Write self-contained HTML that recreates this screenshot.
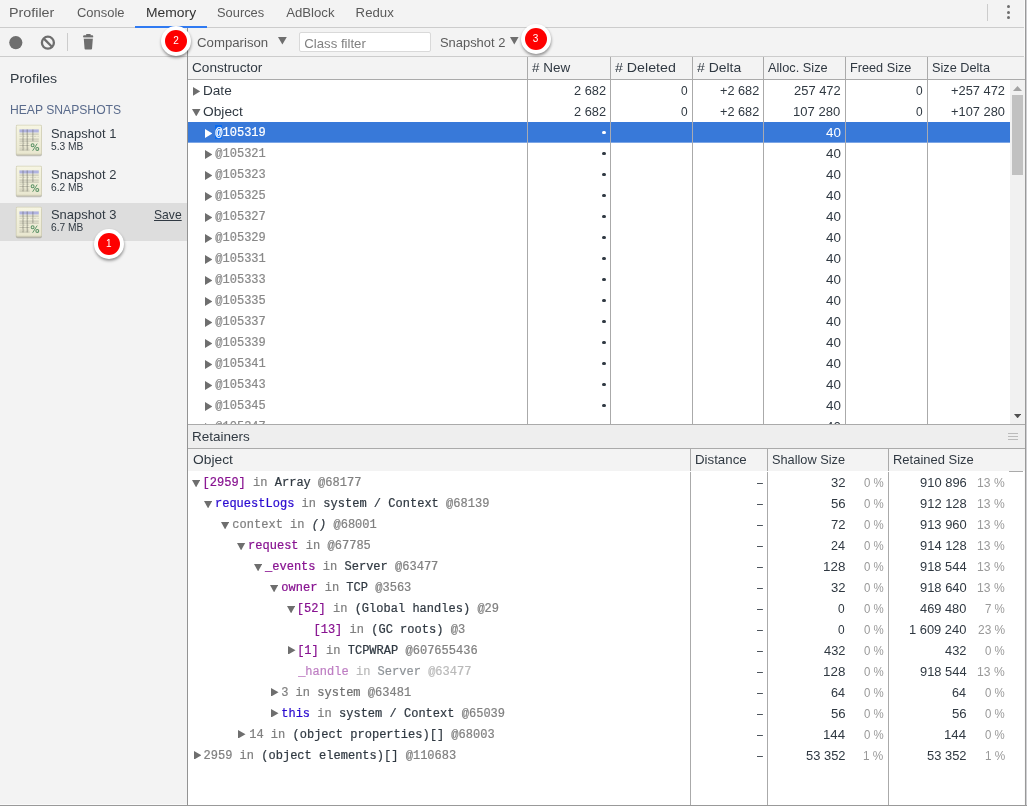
<!DOCTYPE html><html><head><meta charset="utf-8"><title>DevTools Memory</title><style>
*{box-sizing:border-box;margin:0;padding:0}
html,body{width:1027px;height:806px;overflow:hidden;background:#f3f3f3}
#app{position:absolute;left:0;top:0;width:1027px;height:806px;will-change:transform}
body{position:relative;font-family:"Liberation Sans",sans-serif;font-size:12.1px;color:#303942}
.abs,.t,.m{position:absolute;white-space:pre}
.t{font-family:"Liberation Sans",sans-serif;font-size:12.1px;line-height:20px;height:20px;color:#303942;transform-origin:0 50%}
.m{font-family:"Liberation Mono",monospace;font-size:12px;line-height:20px;height:20px;color:#303942;letter-spacing:.02px;transform-origin:0 50%;-webkit-text-stroke:.22px}
.hl{position:absolute;height:1px;background:#aaa}
.vl{position:absolute;width:1px;background:#aaa}
.g{color:#808080}
.p{color:#881391}
.b{color:#2a0ad0}
.pc{color:#999}
.badge{position:absolute;width:22px;height:22px;border-radius:50%;background:#fe0000;color:#fff;font-size:10px;line-height:22px;text-align:center;box-shadow:0 0 0 4px #fff,.3px 1.8px 3px 4px rgba(0,0,0,.4)}
</style></head><body><div id="app">
<div class="abs" id="tabbar" style="left:0px;top:0px;width:1027px;height:28px;background:#f3f3f3;border-bottom:1px solid #ccc"></div>
<div class="t" style="top:3px;left:9.41px;transform:scaleX(1.0858);font-size:13.2px;color:#5a5a5a;">Profiler</div>
<div class="t" style="top:3px;left:77.10px;transform:scaleX(0.9822);font-size:13.2px;color:#5a5a5a;">Console</div>
<div class="t" style="top:3px;left:145.65px;transform:scaleX(1.0521);font-size:13.2px;color:#333;">Memory</div>
<div class="t" style="top:3px;left:217.18px;transform:scaleX(0.9757);font-size:13.2px;color:#5a5a5a;">Sources</div>
<div class="t" style="top:3px;left:286.17px;font-size:13.2px;color:#5a5a5a;">AdBlock</div>
<div class="t" style="top:3px;left:355.62px;font-size:13.2px;color:#5a5a5a;">Redux</div>
<div class="abs" style="left:135px;top:26px;width:72.4px;height:2px;background:#2f7af2;"></div>
<div class="abs" style="left:987px;top:4.2px;width:1px;height:16.6px;background:#ccc;"></div>
<div class="abs" style="left:1006.8px;top:5.2px;width:3.2px;height:3.2px;background:#6e6e6e;border-radius:50%"></div>
<div class="abs" style="left:1006.8px;top:10.75px;width:3.2px;height:3.2px;background:#6e6e6e;border-radius:50%"></div>
<div class="abs" style="left:1006.8px;top:16.3px;width:3.2px;height:3.2px;background:#6e6e6e;border-radius:50%"></div>
<div class="abs" id="toolbar" style="left:0px;top:28px;width:1027px;height:29px;background:#f3f3f3;border-bottom:1px solid #ccc"></div>
<svg class="abs" style="left:0;top:28px" width="110" height="28" viewBox="0 0 110 28"><circle cx="15.8" cy="14.6" r="6.6" fill="#6e6e6e"/><circle cx="47.9" cy="14.7" r="6" fill="none" stroke="#6e6e6e" stroke-width="2.3"/><path d="M43.6 10.4 L52.2 19" stroke="#6e6e6e" stroke-width="2.3"/><path d="M67.5 5v18" stroke="#ccc" stroke-width="1"/><path d="M86.2 6.1h4.4v1.3h-4.4z M83.1 9.2v-1q0-1 1-1h8.1q1 0 1 1v1z M83.8 11.1h9l-.75 9.4q-.08 .9 -.95 .9h-5.6q-.87 0 -.95 -.9z" fill="#6e6e6e"/><path d="M83.7 9.2h9.2v1.9h-9.2z" fill="#6e6e6e" opacity=".3"/></svg>
<div class="t" style="top:33px;left:197.09px;font-size:13.2px;color:#5a5a5a;">Comparison</div>
<svg class="abs" style="left:277.9px;top:37.2px" width="8.8" height="7.5" viewBox="0 0 8.8 7.5"><path d="M0 0L8.8 0L4.4 7.5z" fill="#6e6e6e"/></svg>
<div class="abs" style="left:299px;top:32px;width:131.5px;height:20px;background:#fff;border:1px solid #d9d9d9;border-radius:2px"></div>
<div class="t" style="top:34px;left:304.29px;font-size:13.2px;color:#808080;">Class filter</div>
<div class="t" style="top:33px;left:439.57px;transform:scaleX(0.9794);font-size:13.2px;color:#5a5a5a;">Snapshot 2</div>
<svg class="abs" style="left:510.4px;top:37.2px" width="8.6" height="7.5" viewBox="0 0 8.6 7.5"><path d="M0 0L8.6 0L4.3 7.5z" fill="#6e6e6e"/></svg>
<div class="t" style="top:69px;left:10.23px;transform:scaleX(1.0703);font-size:13.2px;">Profiles</div>
<div class="t" style="top:100px;left:9.91px;transform:scaleX(0.9206);font-size:13.2px;color:#5a6b8c;">HEAP SNAPSHOTS</div>
<div class="abs" style="left:0px;top:203px;width:187px;height:37.5px;background:#dddddd;"></div>
<svg class="abs" style="left:13.9px;top:123.1px" width="30" height="35" viewBox="0 0 30 35"><defs><linearGradient id="ig0" x1="0" y1="0" x2="0" y2="1"><stop offset="0" stop-color="#f6f5e2"/><stop offset="1" stop-color="#e9e7d0"/></linearGradient></defs><rect x="1.9" y="3" width="26" height="30.2" rx="1.6" fill="#84826c" opacity=".45"/><rect x="1.9" y="1.7" width="26" height="30" rx="1.4" fill="#d3d1b8"/><rect x="2.7" y="2.5" width="24.4" height="28.2" rx=".8" fill="url(#ig0)"/><rect x="5.4" y="6.4" width="19.4" height="3.1" fill="#b0b3e0"/><g stroke="#8e8d80" stroke-width=".8" opacity=".62"><path d="M5.4 11.1h19.4M5.4 16.1h19.4M5.4 18.1h19.4M5.4 22.6h10.2M5.4 27h10.2"/></g><g stroke="#8e8d80" stroke-width=".8" opacity=".4" stroke-dasharray="2.6 1"><path d="M5.4 13.3h19.4M5.4 20.2h10.2M5.4 25.1h10.2"/></g><g stroke="#5a5a52" stroke-width=".6" opacity=".8"><path d="M9 6.4v21M13.2 6.4v21M18.9 6.4v11.8"/></g><g fill="none" stroke="#5a9165" stroke-width="1.05"><circle cx="18.6" cy="22.2" r="1.45"/><circle cx="23.3" cy="25.9" r="1.45"/><path d="M23.2 20.6l-4.6 7.2" stroke-width=".95"/></g></svg>
<div class="t" style="top:124px;left:50.62px;transform:scaleX(0.9805);font-size:13.2px;">Snapshot 1</div>
<div class="t" style="top:136px;left:51.12px;transform:scaleX(0.9633);font-size:10.6px;">5.3 MB</div>
<svg class="abs" style="left:13.9px;top:164.0px" width="30" height="35" viewBox="0 0 30 35"><defs><linearGradient id="ig1" x1="0" y1="0" x2="0" y2="1"><stop offset="0" stop-color="#f6f5e2"/><stop offset="1" stop-color="#e9e7d0"/></linearGradient></defs><rect x="1.9" y="3" width="26" height="30.2" rx="1.6" fill="#84826c" opacity=".45"/><rect x="1.9" y="1.7" width="26" height="30" rx="1.4" fill="#d3d1b8"/><rect x="2.7" y="2.5" width="24.4" height="28.2" rx=".8" fill="url(#ig1)"/><rect x="5.4" y="6.4" width="19.4" height="3.1" fill="#b0b3e0"/><g stroke="#8e8d80" stroke-width=".8" opacity=".62"><path d="M5.4 11.1h19.4M5.4 16.1h19.4M5.4 18.1h19.4M5.4 22.6h10.2M5.4 27h10.2"/></g><g stroke="#8e8d80" stroke-width=".8" opacity=".4" stroke-dasharray="2.6 1"><path d="M5.4 13.3h19.4M5.4 20.2h10.2M5.4 25.1h10.2"/></g><g stroke="#5a5a52" stroke-width=".6" opacity=".8"><path d="M9 6.4v21M13.2 6.4v21M18.9 6.4v11.8"/></g><g fill="none" stroke="#5a9165" stroke-width="1.05"><circle cx="18.6" cy="22.2" r="1.45"/><circle cx="23.3" cy="25.9" r="1.45"/><path d="M23.2 20.6l-4.6 7.2" stroke-width=".95"/></g></svg>
<div class="t" style="top:165px;left:50.62px;transform:scaleX(0.9809);font-size:13.2px;">Snapshot 2</div>
<div class="t" style="top:177px;left:51.17px;transform:scaleX(0.9615);font-size:10.6px;">6.2 MB</div>
<svg class="abs" style="left:13.9px;top:204.9px" width="30" height="35" viewBox="0 0 30 35"><defs><linearGradient id="ig2" x1="0" y1="0" x2="0" y2="1"><stop offset="0" stop-color="#f6f5e2"/><stop offset="1" stop-color="#e9e7d0"/></linearGradient></defs><rect x="1.9" y="3" width="26" height="30.2" rx="1.6" fill="#84826c" opacity=".45"/><rect x="1.9" y="1.7" width="26" height="30" rx="1.4" fill="#d3d1b8"/><rect x="2.7" y="2.5" width="24.4" height="28.2" rx=".8" fill="url(#ig2)"/><rect x="5.4" y="6.4" width="19.4" height="3.1" fill="#b0b3e0"/><g stroke="#8e8d80" stroke-width=".8" opacity=".62"><path d="M5.4 11.1h19.4M5.4 16.1h19.4M5.4 18.1h19.4M5.4 22.6h10.2M5.4 27h10.2"/></g><g stroke="#8e8d80" stroke-width=".8" opacity=".4" stroke-dasharray="2.6 1"><path d="M5.4 13.3h19.4M5.4 20.2h10.2M5.4 25.1h10.2"/></g><g stroke="#5a5a52" stroke-width=".6" opacity=".8"><path d="M9 6.4v21M13.2 6.4v21M18.9 6.4v11.8"/></g><g fill="none" stroke="#5a9165" stroke-width="1.05"><circle cx="18.6" cy="22.2" r="1.45"/><circle cx="23.3" cy="25.9" r="1.45"/><path d="M23.2 20.6l-4.6 7.2" stroke-width=".95"/></g></svg>
<div class="t" style="top:205px;left:50.62px;transform:scaleX(0.9805);font-size:13.2px;">Snapshot 3</div>
<div class="t" style="top:217px;left:51.17px;transform:scaleX(0.9615);font-size:10.6px;">6.7 MB</div>
<div class="t" style="top:205px;left:153.69px;transform:scaleX(0.9213);font-size:13.2px;text-decoration:underline;">Save</div>
<div class="abs" id="main" style="left:188px;top:57px;width:837px;height:748px;background:#fff;"></div>
<div class="abs" style="left:187px;top:28px;width:1px;height:778px;background:#939393;"></div>
<div class="abs" style="left:1024px;top:0px;width:1px;height:806px;background:#fafafa;"></div>
<div class="abs" style="left:1025px;top:0px;width:1px;height:806px;background:#999;"></div>
<div class="abs" style="left:1026px;top:0px;width:1px;height:806px;background:#cfcfd2;"></div>
<div class="abs" style="left:0px;top:804px;width:187px;height:1px;background:#fafafa;"></div>
<div class="abs" style="left:0px;top:805px;width:1027px;height:1px;background:#999;"></div>
<div class="abs" style="left:188px;top:57px;width:837px;height:22px;background:#f3f3f3;"></div>
<div class="hl" style="left:188px;top:79px;width:837px;background:#aaa"></div>
<div class="vl" style="left:527px;top:57px;height:367px;background:#aaa"></div>
<div class="vl" style="left:610px;top:57px;height:367px;background:#aaa"></div>
<div class="vl" style="left:692px;top:57px;height:367px;background:#aaa"></div>
<div class="vl" style="left:763px;top:57px;height:367px;background:#aaa"></div>
<div class="vl" style="left:845px;top:57px;height:367px;background:#aaa"></div>
<div class="vl" style="left:927px;top:57px;height:367px;background:#aaa"></div>
<div class="t" style="top:58px;left:192.46px;transform:scaleX(1.1254);">Constructor</div>
<div class="t" style="top:58px;left:532.15px;transform:scaleX(1.1136);"># New</div>
<div class="t" style="top:58px;left:615.12px;transform:scaleX(1.1755);"># Deleted</div>
<div class="t" style="top:58px;left:697.03px;transform:scaleX(1.1534);"># Delta</div>
<div class="t" style="top:58px;left:768.45px;transform:scaleX(1.0566);">Alloc. Size</div>
<div class="t" style="top:58px;left:850.13px;transform:scaleX(1.0499);">Freed Size</div>
<div class="t" style="top:58px;left:932.36px;transform:scaleX(1.0513);">Size Delta</div>
<div class="abs" style="left:188px;top:122px;width:822px;height:20px;background:#3879d9;"></div>
<div class="abs" style="left:188px;top:142px;width:822px;height:1px;background:#7ca6e6;"></div>
<div class="abs" style="left:527px;top:122px;width:1px;height:21px;background:#a8aab2;"></div>
<div class="abs" style="left:610px;top:122px;width:1px;height:21px;background:#a8aab2;"></div>
<div class="abs" style="left:692px;top:122px;width:1px;height:21px;background:#a8aab2;"></div>
<div class="abs" style="left:763px;top:122px;width:1px;height:21px;background:#a8aab2;"></div>
<div class="abs" style="left:845px;top:122px;width:1px;height:21px;background:#a8aab2;"></div>
<div class="abs" style="left:927px;top:122px;width:1px;height:21px;background:#a8aab2;"></div>
<svg class="abs" style="left:193px;top:87px" width="7.1" height="8.7" viewBox="0 0 7.1 8.7"><path d="M0 0L7.1 4.35L0 8.7z" fill="#6e6e6e"/></svg>
<div class="t" style="top:81px;left:203.34px;transform:scaleX(1.1235);">Date</div>
<svg class="abs" style="left:192px;top:108.6px" width="8.5" height="7.4" viewBox="0 0 8.5 7.4"><path d="M0 0L8.5 0L4.25 7.4z" fill="#6e6e6e"/></svg>
<div class="t" style="top:102px;left:203.48px;transform:scaleX(1.1361);">Object</div>
<div class="t" style="top:81px;left:573.68px;transform:scaleX(1.0581);">2 682</div>
<div class="t" style="top:81px;left:681.35px;transform:scaleX(0.9862);">0</div>
<div class="t" style="top:81px;left:719.61px;transform:scaleX(1.0517);">+2 682</div>
<div class="t" style="top:81px;left:793.83px;transform:scaleX(1.0696);">257 472</div>
<div class="t" style="top:81px;left:915.85px;transform:scaleX(0.9862);">0</div>
<div class="t" style="top:81px;left:950.56px;transform:scaleX(1.0633);">+257 472</div>
<div class="t" style="top:102px;left:573.68px;transform:scaleX(1.0581);">2 682</div>
<div class="t" style="top:102px;left:681.35px;transform:scaleX(0.9862);">0</div>
<div class="t" style="top:102px;left:719.61px;transform:scaleX(1.0517);">+2 682</div>
<div class="t" style="top:102px;left:793.35px;transform:scaleX(1.0788);">107 280</div>
<div class="t" style="top:102px;left:915.85px;transform:scaleX(0.9862);">0</div>
<div class="t" style="top:102px;left:950.56px;transform:scaleX(1.0616);">+107 280</div>
<div class="abs" style="left:188px;top:80px;width:822px;height:344px;overflow:hidden" id="ugrid">
<svg class="abs" style="left:17px;top:49px" width="7.4" height="9" viewBox="0 0 7.4 9"><path d="M0 0L7.4 4.5L0 9z" fill="#fff"/></svg>
<div class="abs" style="left:27.10px;top:45px;width:7px;height:14px;background:#0b6cf0;"></div>
<div class="m" style="top:43px;left:27.26px;color:#fff;">@105319</div>
<div class="abs" style="left:414.1px;top:50.70px;width:3.5px;height:3.5px;background:#fff;border-radius:50%"></div>
<div class="t" style="top:43px;left:638.12px;transform:scaleX(1.1097);color:#fff;">40</div>
<svg class="abs" style="left:17px;top:70px" width="7.4" height="9" viewBox="0 0 7.4 9"><path d="M0 0L7.4 4.5L0 9z" fill="#6e6e6e"/></svg>
<div class="m" style="top:64px;left:27.26px;color:#888;">@105321</div>
<div class="abs" style="left:414.1px;top:71.70px;width:3.5px;height:3.5px;background:#303942;border-radius:50%"></div>
<div class="t" style="top:64px;left:638.12px;transform:scaleX(1.1097);">40</div>
<svg class="abs" style="left:17px;top:91px" width="7.4" height="9" viewBox="0 0 7.4 9"><path d="M0 0L7.4 4.5L0 9z" fill="#6e6e6e"/></svg>
<div class="m" style="top:85px;left:27.26px;color:#888;">@105323</div>
<div class="abs" style="left:414.1px;top:92.70px;width:3.5px;height:3.5px;background:#303942;border-radius:50%"></div>
<div class="t" style="top:85px;left:638.12px;transform:scaleX(1.1097);">40</div>
<svg class="abs" style="left:17px;top:112px" width="7.4" height="9" viewBox="0 0 7.4 9"><path d="M0 0L7.4 4.5L0 9z" fill="#6e6e6e"/></svg>
<div class="m" style="top:106px;left:27.26px;color:#888;">@105325</div>
<div class="abs" style="left:414.1px;top:113.70px;width:3.5px;height:3.5px;background:#303942;border-radius:50%"></div>
<div class="t" style="top:106px;left:638.12px;transform:scaleX(1.1097);">40</div>
<svg class="abs" style="left:17px;top:133px" width="7.4" height="9" viewBox="0 0 7.4 9"><path d="M0 0L7.4 4.5L0 9z" fill="#6e6e6e"/></svg>
<div class="m" style="top:127px;left:27.26px;color:#888;">@105327</div>
<div class="abs" style="left:414.1px;top:134.7px;width:3.5px;height:3.5px;background:#303942;border-radius:50%"></div>
<div class="t" style="top:127px;left:638.12px;transform:scaleX(1.1097);">40</div>
<svg class="abs" style="left:17px;top:154px" width="7.4" height="9" viewBox="0 0 7.4 9"><path d="M0 0L7.4 4.5L0 9z" fill="#6e6e6e"/></svg>
<div class="m" style="top:148px;left:27.26px;color:#888;">@105329</div>
<div class="abs" style="left:414.1px;top:155.7px;width:3.5px;height:3.5px;background:#303942;border-radius:50%"></div>
<div class="t" style="top:148px;left:638.12px;transform:scaleX(1.1097);">40</div>
<svg class="abs" style="left:17px;top:175px" width="7.4" height="9" viewBox="0 0 7.4 9"><path d="M0 0L7.4 4.5L0 9z" fill="#6e6e6e"/></svg>
<div class="m" style="top:169px;left:27.26px;color:#888;">@105331</div>
<div class="abs" style="left:414.1px;top:176.7px;width:3.5px;height:3.5px;background:#303942;border-radius:50%"></div>
<div class="t" style="top:169px;left:638.12px;transform:scaleX(1.1097);">40</div>
<svg class="abs" style="left:17px;top:196px" width="7.4" height="9" viewBox="0 0 7.4 9"><path d="M0 0L7.4 4.5L0 9z" fill="#6e6e6e"/></svg>
<div class="m" style="top:190px;left:27.26px;color:#888;">@105333</div>
<div class="abs" style="left:414.1px;top:197.7px;width:3.5px;height:3.5px;background:#303942;border-radius:50%"></div>
<div class="t" style="top:190px;left:638.12px;transform:scaleX(1.1097);">40</div>
<svg class="abs" style="left:17px;top:217px" width="7.4" height="9" viewBox="0 0 7.4 9"><path d="M0 0L7.4 4.5L0 9z" fill="#6e6e6e"/></svg>
<div class="m" style="top:211px;left:27.26px;color:#888;">@105335</div>
<div class="abs" style="left:414.1px;top:218.7px;width:3.5px;height:3.5px;background:#303942;border-radius:50%"></div>
<div class="t" style="top:211px;left:638.12px;transform:scaleX(1.1097);">40</div>
<svg class="abs" style="left:17px;top:238px" width="7.4" height="9" viewBox="0 0 7.4 9"><path d="M0 0L7.4 4.5L0 9z" fill="#6e6e6e"/></svg>
<div class="m" style="top:232px;left:27.26px;color:#888;">@105337</div>
<div class="abs" style="left:414.1px;top:239.7px;width:3.5px;height:3.5px;background:#303942;border-radius:50%"></div>
<div class="t" style="top:232px;left:638.12px;transform:scaleX(1.1097);">40</div>
<svg class="abs" style="left:17px;top:259px" width="7.4" height="9" viewBox="0 0 7.4 9"><path d="M0 0L7.4 4.5L0 9z" fill="#6e6e6e"/></svg>
<div class="m" style="top:253px;left:27.26px;color:#888;">@105339</div>
<div class="abs" style="left:414.1px;top:260.7px;width:3.5px;height:3.5px;background:#303942;border-radius:50%"></div>
<div class="t" style="top:253px;left:638.12px;transform:scaleX(1.1097);">40</div>
<svg class="abs" style="left:17px;top:280px" width="7.4" height="9" viewBox="0 0 7.4 9"><path d="M0 0L7.4 4.5L0 9z" fill="#6e6e6e"/></svg>
<div class="m" style="top:274px;left:27.26px;color:#888;">@105341</div>
<div class="abs" style="left:414.1px;top:281.7px;width:3.5px;height:3.5px;background:#303942;border-radius:50%"></div>
<div class="t" style="top:274px;left:638.12px;transform:scaleX(1.1097);">40</div>
<svg class="abs" style="left:17px;top:301px" width="7.4" height="9" viewBox="0 0 7.4 9"><path d="M0 0L7.4 4.5L0 9z" fill="#6e6e6e"/></svg>
<div class="m" style="top:295px;left:27.26px;color:#888;">@105343</div>
<div class="abs" style="left:414.1px;top:302.7px;width:3.5px;height:3.5px;background:#303942;border-radius:50%"></div>
<div class="t" style="top:295px;left:638.12px;transform:scaleX(1.1097);">40</div>
<svg class="abs" style="left:17px;top:322px" width="7.4" height="9" viewBox="0 0 7.4 9"><path d="M0 0L7.4 4.5L0 9z" fill="#6e6e6e"/></svg>
<div class="m" style="top:316px;left:27.26px;color:#888;">@105345</div>
<div class="abs" style="left:414.1px;top:323.7px;width:3.5px;height:3.5px;background:#303942;border-radius:50%"></div>
<div class="t" style="top:316px;left:638.12px;transform:scaleX(1.1097);">40</div>
<svg class="abs" style="left:17px;top:343px" width="7.4" height="9" viewBox="0 0 7.4 9"><path d="M0 0L7.4 4.5L0 9z" fill="#6e6e6e"/></svg>
<div class="m" style="top:337px;left:27.26px;color:#888;">@105347</div>
<div class="abs" style="left:414.1px;top:344.7px;width:3.5px;height:3.5px;background:#303942;border-radius:50%"></div>
<div class="t" style="top:337px;left:638.12px;transform:scaleX(1.1097);">40</div>
</div>
<div class="abs" style="left:1010px;top:80px;width:15px;height:344px;background:#f1f1f1;"></div>
<div class="abs" style="left:1012px;top:95px;width:11px;height:80px;background:#c1c1c1;"></div>
<svg class="abs" style="left:1013px;top:85.5px" width="9" height="5"><path d="M0 5L4.5 0L9 5z" fill="#a3a3a3"/></svg>
<svg class="abs" style="left:1013.7px;top:413.8px" width="7.2" height="4.3"><path d="M0 0L3.6 4.3L7.2 0z" fill="#505050"/></svg>
<div class="hl" style="left:188px;top:424px;width:837px;background:#aaa"></div>
<div class="abs" style="left:188px;top:425px;width:837px;height:23px;background:#eee;"></div>
<div class="t" style="top:427px;left:191.95px;transform:scaleX(1.1180);">Retainers</div>
<div class="abs" style="left:1008.3px;top:433.0px;width:10px;height:1px;background:#bbb;"></div>
<div class="abs" style="left:1008.3px;top:436.2px;width:10px;height:1px;background:#bbb;"></div>
<div class="abs" style="left:1008.3px;top:439.4px;width:10px;height:1px;background:#bbb;"></div>
<div class="hl" style="left:188px;top:448px;width:837px;background:#aaa"></div>
<div class="abs" style="left:188px;top:449px;width:837px;height:22px;background:#f3f3f3;"></div>
<div class="vl" style="left:690px;top:449px;height:356px;background:#aaa"></div>
<div class="vl" style="left:767px;top:449px;height:356px;background:#aaa"></div>
<div class="vl" style="left:888px;top:449px;height:356px;background:#aaa"></div>
<div class="hl" style="left:1009px;top:471px;width:14.3px;background:#aaa"></div>
<div class="abs" style="left:690px;top:471px;width:1px;height:1px;background:#fff;"></div>
<div class="abs" style="left:767px;top:471px;width:1px;height:1px;background:#fff;"></div>
<div class="abs" style="left:888px;top:471px;width:1px;height:1px;background:#fff;"></div>
<div class="t" style="top:450px;left:192.68px;transform:scaleX(1.1420);">Object</div>
<div class="t" style="top:450px;left:695.17px;transform:scaleX(1.0978);">Distance</div>
<div class="t" style="top:450px;left:772.36px;transform:scaleX(1.0545);">Shallow Size</div>
<div class="t" style="top:450px;left:892.80px;transform:scaleX(1.0723);">Retained Size</div>
<svg class="abs" style="left:192.0px;top:479.6px" width="8.2" height="7.4" viewBox="0 0 8.2 7.4"><path d="M0 0L8.2 0L4.1 7.4z" fill="#6e6e6e"/></svg>
<div class="m" style="top:473px;left:202.50px;"><span class="p">[2959]</span><span class="g"> in </span>Array<span class="g"> @68177</span></div>
<div class="t" style="top:473px;left:757.47px;transform:scaleX(0.8766);">–</div>
<div class="t" style="top:473px;left:830.69px;transform:scaleX(1.0819);">32</div>
<div class="t" style="top:473px;left:863.62px;transform:scaleX(0.9470);color:#999;">0 %</div>
<div class="t" style="top:473px;left:919.52px;transform:scaleX(1.0699);">910 896</div>
<div class="t" style="top:473px;left:977.12px;color:#999;">13 %</div>
<svg class="abs" style="left:203.90px;top:500.6px" width="8.2" height="7.4" viewBox="0 0 8.2 7.4"><path d="M0 0L8.2 0L4.1 7.4z" fill="#6e6e6e"/></svg>
<div class="m" style="top:494px;left:214.96px;"><span class="b">requestLogs</span><span class="g"> in </span>system / Context<span class="g"> @68139</span></div>
<div class="t" style="top:494px;left:757.47px;transform:scaleX(0.8766);">–</div>
<div class="t" style="top:494px;left:830.66px;transform:scaleX(1.0918);">56</div>
<div class="t" style="top:494px;left:863.62px;transform:scaleX(0.9470);color:#999;">0 %</div>
<div class="t" style="top:494px;left:919.52px;transform:scaleX(1.0689);">912 128</div>
<div class="t" style="top:494px;left:977.12px;color:#999;">13 %</div>
<svg class="abs" style="left:220.80px;top:521.6px" width="8.2" height="7.4" viewBox="0 0 8.2 7.4"><path d="M0 0L8.2 0L4.1 7.4z" fill="#6e6e6e"/></svg>
<div class="m" style="top:515px;left:232.33px;"><span class="g">context in </span><i>()</i><span class="g"> @68001</span></div>
<div class="t" style="top:515px;left:757.47px;transform:scaleX(0.8766);">–</div>
<div class="t" style="top:515px;left:830.75px;transform:scaleX(1.0770);">72</div>
<div class="t" style="top:515px;left:863.62px;transform:scaleX(0.9470);color:#999;">0 %</div>
<div class="t" style="top:515px;left:919.52px;transform:scaleX(1.0679);">913 960</div>
<div class="t" style="top:515px;left:977.12px;color:#999;">13 %</div>
<svg class="abs" style="left:237.40px;top:542.6px" width="8.2" height="7.4" viewBox="0 0 8.2 7.4"><path d="M0 0L8.2 0L4.1 7.4z" fill="#6e6e6e"/></svg>
<div class="m" style="top:536px;left:248.06px;"><span class="p">request</span><span class="g"> in @67785</span></div>
<div class="t" style="top:536px;left:757.47px;transform:scaleX(0.8766);">–</div>
<div class="t" style="top:536px;left:830.78px;transform:scaleX(1.0425);">24</div>
<div class="t" style="top:536px;left:863.62px;transform:scaleX(0.9470);color:#999;">0 %</div>
<div class="t" style="top:536px;left:919.52px;transform:scaleX(1.0689);">914 128</div>
<div class="t" style="top:536px;left:977.12px;color:#999;">13 %</div>
<svg class="abs" style="left:253.90px;top:563.6px" width="8.2" height="7.4" viewBox="0 0 8.2 7.4"><path d="M0 0L8.2 0L4.1 7.4z" fill="#6e6e6e"/></svg>
<div class="m" style="top:557px;left:265.03px;"><span class="p">_events</span><span class="g"> in </span>Server<span class="g"> @63477</span></div>
<div class="t" style="top:557px;left:757.47px;transform:scaleX(0.8766);">–</div>
<div class="t" style="top:557px;left:822.83px;transform:scaleX(1.1061);">128</div>
<div class="t" style="top:557px;left:863.62px;transform:scaleX(0.9470);color:#999;">0 %</div>
<div class="t" style="top:557px;left:919.52px;transform:scaleX(1.0650);">918 544</div>
<div class="t" style="top:557px;left:977.12px;color:#999;">13 %</div>
<svg class="abs" style="left:270.10px;top:584.6px" width="8.2" height="7.4" viewBox="0 0 8.2 7.4"><path d="M0 0L8.2 0L4.1 7.4z" fill="#6e6e6e"/></svg>
<div class="m" style="top:578px;left:281.33px;"><span class="p">owner</span><span class="g"> in </span>TCP<span class="g"> @3563</span></div>
<div class="t" style="top:578px;left:757.47px;transform:scaleX(0.8766);">–</div>
<div class="t" style="top:578px;left:830.69px;transform:scaleX(1.0819);">32</div>
<div class="t" style="top:578px;left:863.62px;transform:scaleX(0.9470);color:#999;">0 %</div>
<div class="t" style="top:578px;left:919.52px;transform:scaleX(1.0679);">918 640</div>
<div class="t" style="top:578px;left:977.12px;color:#999;">13 %</div>
<svg class="abs" style="left:286.7px;top:605.6px" width="8.2" height="7.4" viewBox="0 0 8.2 7.4"><path d="M0 0L8.2 0L4.1 7.4z" fill="#6e6e6e"/></svg>
<div class="m" style="top:599px;left:296.85px;"><span class="p">[52]</span><span class="g"> in </span>(Global handles)<span class="g"> @29</span></div>
<div class="t" style="top:599px;left:757.47px;transform:scaleX(0.8766);">–</div>
<div class="t" style="top:599px;left:838.35px;transform:scaleX(0.9862);">0</div>
<div class="t" style="top:599px;left:863.62px;transform:scaleX(0.9470);color:#999;">0 %</div>
<div class="t" style="top:599px;left:919.86px;transform:scaleX(1.0601);">469 480</div>
<div class="t" style="top:599px;left:985.00px;transform:scaleX(0.9531);color:#999;">7 %</div>
<div class="m" style="top:620px;left:313.45px;"><span class="p">[13]</span><span class="g"> in </span>(GC roots)<span class="g"> @3</span></div>
<div class="t" style="top:620px;left:757.47px;transform:scaleX(0.8766);">–</div>
<div class="t" style="top:620px;left:838.35px;transform:scaleX(0.9862);">0</div>
<div class="t" style="top:620px;left:863.62px;transform:scaleX(0.9470);color:#999;">0 %</div>
<div class="t" style="top:620px;left:908.90px;transform:scaleX(1.0669);">1 609 240</div>
<div class="t" style="top:620px;left:977.57px;transform:scaleX(0.9871);color:#999;">23 %</div>
<svg class="abs" style="left:288.1px;top:645.5px" width="7.5" height="8.6" viewBox="0 0 7.5 8.6"><path d="M0 0L7.5 4.3L0 8.6z" fill="#6e6e6e"/></svg>
<div class="m" style="top:641px;left:297.15px;"><span class="p">[1]</span><span class="g"> in </span>TCPWRAP<span class="g"> @607655436</span></div>
<div class="t" style="top:641px;left:757.47px;transform:scaleX(0.8766);">–</div>
<div class="t" style="top:641px;left:823.67px;transform:scaleX(1.0626);">432</div>
<div class="t" style="top:641px;left:863.62px;transform:scaleX(0.9470);color:#999;">0 %</div>
<div class="t" style="top:641px;left:944.87px;transform:scaleX(1.0626);">432</div>
<div class="t" style="top:641px;left:985.12px;transform:scaleX(0.9470);color:#999;">0 %</div>
<div class="m" style="top:662px;left:298.13px;opacity:0.55;"><span class="p">_handle</span><span class="g"> in </span>Server<span class="g"> @63477</span></div>
<div class="t" style="top:662px;left:757.47px;transform:scaleX(0.8766);">–</div>
<div class="t" style="top:662px;left:822.83px;transform:scaleX(1.1061);">128</div>
<div class="t" style="top:662px;left:863.62px;transform:scaleX(0.9470);color:#999;">0 %</div>
<div class="t" style="top:662px;left:919.52px;transform:scaleX(1.0650);">918 544</div>
<div class="t" style="top:662px;left:977.12px;color:#999;">13 %</div>
<svg class="abs" style="left:271.2px;top:687.5px" width="7.5" height="8.6" viewBox="0 0 7.5 8.6"><path d="M0 0L7.5 4.3L0 8.6z" fill="#6e6e6e"/></svg>
<div class="m" style="top:683px;left:281.15px;"><span class="g">3 in </span><span style="color:#707070">system</span><span class="g"> @63481</span></div>
<div class="t" style="top:683px;left:757.47px;transform:scaleX(0.8766);">–</div>
<div class="t" style="top:683px;left:830.77px;transform:scaleX(1.0435);">64</div>
<div class="t" style="top:683px;left:863.62px;transform:scaleX(0.9470);color:#999;">0 %</div>
<div class="t" style="top:683px;left:951.97px;transform:scaleX(1.0435);">64</div>
<div class="t" style="top:683px;left:985.12px;transform:scaleX(0.9470);color:#999;">0 %</div>
<svg class="abs" style="left:271.2px;top:708.5px" width="7.5" height="8.6" viewBox="0 0 7.5 8.6"><path d="M0 0L7.5 4.3L0 8.6z" fill="#6e6e6e"/></svg>
<div class="m" style="top:704px;left:281.19px;"><span class="b">this</span><span class="g"> in </span>system / Context<span class="g"> @65039</span></div>
<div class="t" style="top:704px;left:757.47px;transform:scaleX(0.8766);">–</div>
<div class="t" style="top:704px;left:830.66px;transform:scaleX(1.0918);">56</div>
<div class="t" style="top:704px;left:863.62px;transform:scaleX(0.9470);color:#999;">0 %</div>
<div class="t" style="top:704px;left:951.86px;transform:scaleX(1.0918);">56</div>
<div class="t" style="top:704px;left:985.12px;transform:scaleX(0.9470);color:#999;">0 %</div>
<svg class="abs" style="left:238.10px;top:729.5px" width="7.5" height="8.6" viewBox="0 0 7.5 8.6"><path d="M0 0L7.5 4.3L0 8.6z" fill="#6e6e6e"/></svg>
<div class="m" style="top:725px;left:249.16px;"><span class="g">14 in </span>(object properties)[]<span class="g"> @68003</span></div>
<div class="t" style="top:725px;left:757.47px;transform:scaleX(0.8766);">–</div>
<div class="t" style="top:725px;left:822.85px;transform:scaleX(1.0954);">144</div>
<div class="t" style="top:725px;left:863.62px;transform:scaleX(0.9470);color:#999;">0 %</div>
<div class="t" style="top:725px;left:944.05px;transform:scaleX(1.0954);">144</div>
<div class="t" style="top:725px;left:985.12px;transform:scaleX(0.9470);color:#999;">0 %</div>
<svg class="abs" style="left:193.8px;top:750.5px" width="7.5" height="8.6" viewBox="0 0 7.5 8.6"><path d="M0 0L7.5 4.3L0 8.6z" fill="#6e6e6e"/></svg>
<div class="m" style="top:746px;left:203.49px;"><span class="g">2959 in </span>(object elements)[]<span class="g"> @110683</span></div>
<div class="t" style="top:746px;left:757.47px;transform:scaleX(0.8766);">–</div>
<div class="t" style="top:746px;left:805.67px;transform:scaleX(1.0681);">53 352</div>
<div class="t" style="top:746px;left:863.07px;transform:scaleX(0.9744);color:#999;">1 %</div>
<div class="t" style="top:746px;left:926.87px;transform:scaleX(1.0681);">53 352</div>
<div class="t" style="top:746px;left:984.57px;transform:scaleX(0.9744);color:#999;">1 %</div>
<div class="badge" style="left:97.9px;top:233.3px">1</div>
<div class="badge" style="left:165px;top:30px">2</div>
<div class="badge" style="left:524.5px;top:27.70px">3</div>
</div></body></html>
